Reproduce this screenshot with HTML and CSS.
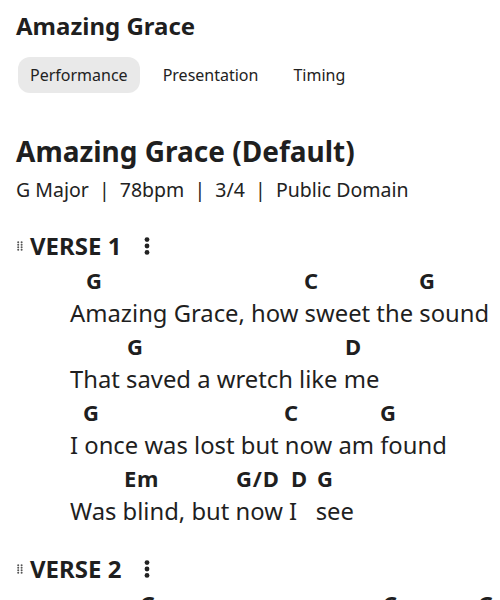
FILE: index.html
```html
<!DOCTYPE html>
<html>
<head>
<meta charset="utf-8">
<link rel="stylesheet" href="styles.css">
</head>
<body>
<div class="page">
  <h1 class="song-title">Amazing Grace</h1>
  <nav class="tabs">
    <span class="tab active">Performance</span>
    <span class="tab">Presentation</span>
    <span class="tab">Timing</span>
  </nav>
  <h2 class="arr-title">Amazing Grace (Default)</h2>
  <div class="meta">G Major &nbsp;|&nbsp; 78bpm &nbsp;|&nbsp; 3/4 &nbsp;|&nbsp; Public Domain</div>

  <section class="section">
    <div class="sec-head">
      <svg class="grip" width="6" height="10" viewBox="0 0 6 10"><g fill="#555"><circle cx="1.2" cy="1.2" r="1"/><circle cx="4.6" cy="1.2" r="1"/><circle cx="1.2" cy="3.7" r="1"/><circle cx="4.6" cy="3.7" r="1"/><circle cx="1.2" cy="6.2" r="1"/><circle cx="4.6" cy="6.2" r="1"/><circle cx="1.2" cy="8.7" r="1"/><circle cx="4.6" cy="8.7" r="1"/></g></svg>
      <span class="sec-name">VERSE 1</span>
      <svg class="kebab" width="6" height="18" viewBox="0 0 6 18"><g fill="#222"><circle cx="3" cy="2.6" r="2.4"/><circle cx="3" cy="9" r="2.4"/><circle cx="3" cy="15.4" r="2.4"/></g></svg>
    </div>
    <div class="line">
      <div class="chords"><span class="chord" style="--x:16px">G</span><span class="chord" style="--x:234px">C</span><span class="chord" style="--x:349px">G</span></div>
      <div class="lyric">Amazing Grace, how sweet the sound</div>
    </div>
    <div class="line">
      <div class="chords"><span class="chord" style="--x:57px">G</span><span class="chord" style="--x:275px">D</span></div>
      <div class="lyric">That saved a wretch like me</div>
    </div>
    <div class="line">
      <div class="chords"><span class="chord" style="--x:13px">G</span><span class="chord" style="--x:214px">C</span><span class="chord" style="--x:310px">G</span></div>
      <div class="lyric">I once was lost but now am found</div>
    </div>
    <div class="line">
      <div class="chords"><span class="chord" style="--x:54px">Em</span><span class="chord" style="--x:166px">G/D</span><span class="chord" style="--x:221px">D</span><span class="chord" style="--x:247px">G</span></div>
      <div class="lyric">Was blind, but now I &nbsp; see</div>
    </div>
  </section>

  <section class="section">
    <div class="sec-head">
      <svg class="grip" width="6" height="10" viewBox="0 0 6 10"><g fill="#555"><circle cx="1.2" cy="1.2" r="1"/><circle cx="4.6" cy="1.2" r="1"/><circle cx="1.2" cy="3.7" r="1"/><circle cx="4.6" cy="3.7" r="1"/><circle cx="1.2" cy="6.2" r="1"/><circle cx="4.6" cy="6.2" r="1"/><circle cx="1.2" cy="8.7" r="1"/><circle cx="4.6" cy="8.7" r="1"/></g></svg>
      <span class="sec-name">VERSE 2</span>
      <svg class="kebab" width="6" height="18" viewBox="0 0 6 18"><g fill="#222"><circle cx="3" cy="2.6" r="2.4"/><circle cx="3" cy="9" r="2.4"/><circle cx="3" cy="15.4" r="2.4"/></g></svg>
    </div>
    <div class="line">
      <div class="chords"><span class="chord" style="--x:70px">G</span><span class="chord" style="--x:313px">C</span><span class="chord" style="--x:408px">G</span></div>
      <div class="lyric">'Twas grace that taught my heart to fear</div>
    </div>
  </section>
</div>
</body>
</html>
```

FILE: styles.css
```css
html, body {
  margin: 0;
  padding: 0;
  background: #fff;
}
body {
  font-family: "Noto Sans", "Open Sans", sans-serif;
  color: #1f1f1f;
  overflow: hidden;
}
.page {
  padding: 10px 16px 0 16px;
}
.song-title {
  margin: 0;
  font-size: 24px;
  font-weight: 700;
  line-height: 32px;
}
.tabs {
  display: flex;
  gap: 2px;
  margin-top: 15px;
  margin-left: 2px;
}
.tab {
  font-size: 16px;
  line-height: 36px;
  padding: 0 12px;
  border-radius: 12px;
  color: #222;
}
.tabs .tab + .tab {
  margin-left: 9px;
}
.tab.active {
  background: #e9e9e9;
}
.arr-title {
  margin: 40px 0 0 0;
  font-size: 28px;
  font-weight: 700;
  line-height: 36px;
}
.meta {
  font-size: 19.5px;
  line-height: 26px;
  margin-top: 8px;
  color: #222;
}
.section {
  margin-top: 28px;
}
.section + .section {
  margin-top: 26px;
}
.sec-head {
  display: flex;
  align-items: center;
  height: 30px;
  line-height: 30px;
}
.grip {
  margin-left: 1px;
  margin-right: 7px;
}
.sec-name {
  font-size: 24px;
  font-weight: 700;
}
.kebab {
  margin-left: 23px;
}
.line {
  padding-left: 54px;
}
.sec-head + .line {
  margin-top: 3px;
}
.chords {
  display: grid;
  height: 33px;
  line-height: 33px;
  font-size: 22px;
  font-weight: 700;
  letter-spacing: 0.8px;
}
.chord {
  grid-area: 1 / 1;
  margin-left: var(--x);
  white-space: nowrap;
}
.lyric {
  font-size: 23.8px;
  line-height: 33px;
  white-space: nowrap;
}
```
